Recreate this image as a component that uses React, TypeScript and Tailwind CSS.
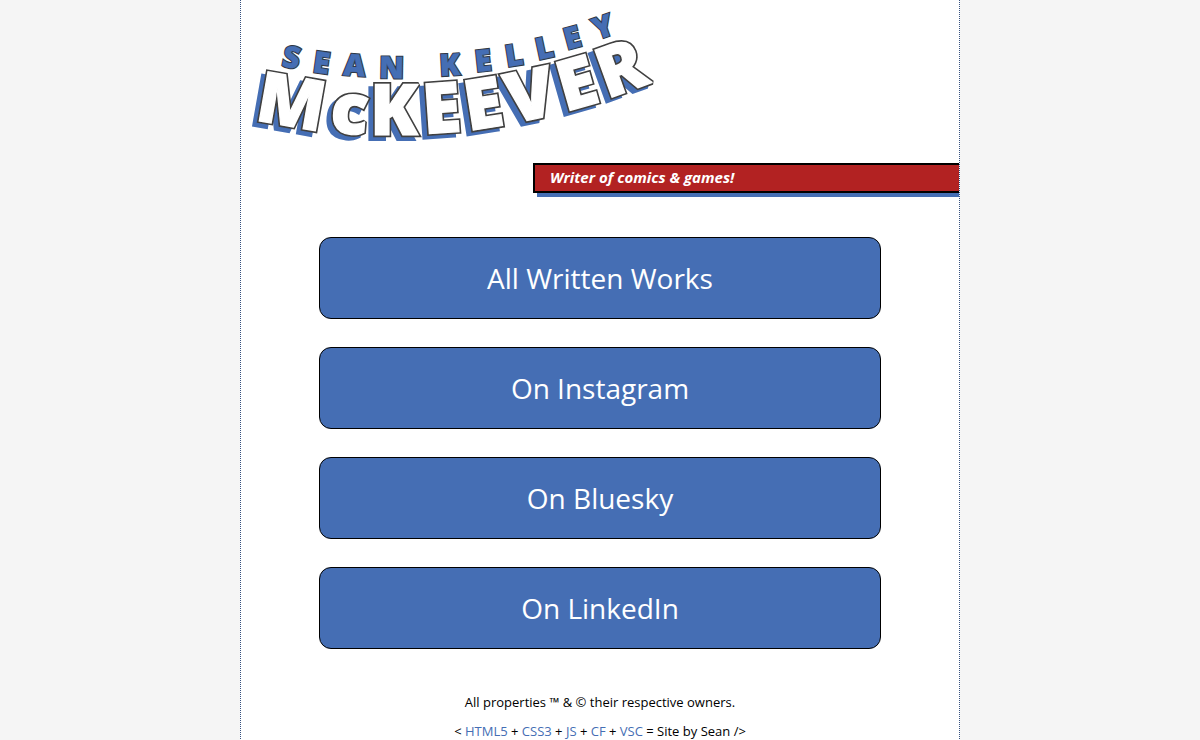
type Letter = {
  char: string;
  x: number;
  y: number;
  angle: number;
};

type NavLink = {
  label: string;
  href: string;
};

const firstNames: Letter[] = [
  { char: "S", x: 40, y: 66, angle: 11 },
  { char: "E", x: 71, y: 72, angle: 8 },
  { char: "A", x: 102, y: 75, angle: 4 },
  { char: "N", x: 138, y: 78, angle: 1 },
  { char: "K", x: 199, y: 76, angle: -3 },
  { char: "E", x: 235, y: 72, angle: -6 },
  { char: "L", x: 266, y: 67, angle: -9 },
  { char: "L", x: 297, y: 60, angle: -12 },
  { char: "E", x: 326, y: 50, angle: -15 },
  { char: "Y", x: 356, y: 40, angle: -19 },
];

const lastName: Letter[] = [
  { char: "M", x: 13, y: 120, angle: 10 },
  { char: "c", x: 88, y: 132, angle: 5 },
  { char: "K", x: 129, y: 135, angle: 0 },
  { char: "E", x: 183, y: 134, angle: -4 },
  { char: "E", x: 227, y: 131, angle: -9 },
  { char: "V", x: 270, y: 124, angle: -12 },
  { char: "E", x: 324, y: 112, angle: -16 },
  { char: "R", x: 366, y: 99, angle: -20 },
];

const links: NavLink[] = [
  { label: "All Written Works", href: "#works" },
  { label: "On Instagram", href: "#instagram" },
  { label: "On Bluesky", href: "#bluesky" },
  { label: "On LinkedIn", href: "#linkedin" },
];

const credits: NavLink[] = [
  { label: "HTML5", href: "#html5" },
  { label: "CSS3", href: "#css3" },
  { label: "JS", href: "#js" },
  { label: "CF", href: "#cf" },
  { label: "VSC", href: "#vsc" },
];

const Letters = ({ items }: { items: Letter[] }) => (
  <>
    {items.map((l, i) => (
      <text key={i} transform={`translate(${l.x} ${l.y}) rotate(${l.angle})`}>
        {l.char}
      </text>
    ))}
  </>
);

const Logo = () => (
  <svg
    viewBox="0 0 430 163"
    className="w-[430px] max-w-full overflow-visible font-extrabold"
    role="img"
    aria-label="Sean Kelley McKeever"
    strokeLinejoin="miter"
    strokeMiterlimit="2"
  >
    {/* drop shadow */}
    <g
      transform="translate(-5 4)"
      className="fill-[#456eb4] stroke-[#456eb4] text-[70px]"
      strokeWidth="4"
      aria-hidden="true"
    >
      <Letters items={lastName} />
    </g>
    {/* dark outline, then the white face on top */}
    <g className="fill-[#404040] stroke-[#404040] text-[70px]" strokeWidth="4.5">
      <Letters items={lastName} />
    </g>
    <g className="fill-white stroke-white text-[70px]" strokeWidth="1.2">
      <Letters items={lastName} />
    </g>

    <g className="fill-[#303845] stroke-[#303845] text-[30px]" strokeWidth="2.4">
      <Letters items={firstNames} />
    </g>
    <g className="fill-[#456eb4] stroke-[#456eb4] text-[30px]" strokeWidth="0.4">
      <Letters items={firstNames} />
    </g>
  </svg>
);

const App = () => {
  return (
    <div className="min-h-screen bg-[#f5f5f5] font-['Open_Sans',sans-serif] text-black">
      <div className="mx-auto flex min-h-screen w-full flex-col overflow-hidden border-x border-dotted border-[#35507f] bg-white md:w-3/5">
        <header className="flex flex-col">
          <h1>
            <Logo />
          </h1>
          <p className="w-[426px] max-w-full self-end border-2 border-r-0 border-black bg-[#b22222] px-[15px] pb-0.5 text-[15px] leading-6 font-bold text-white italic shadow-[4px_4px_0_#456eb4]">
            Writer of comics &amp; games!
          </p>
        </header>

        <nav className="mx-auto mt-11 flex w-[calc(78%+2px)] flex-col gap-7">
          {links.map((link) => (
            <a
              key={link.label}
              href={link.href}
              className="rounded-xl border border-black bg-[#456eb4] py-5 text-center text-[28px] leading-10 text-white"
            >
              {link.label}
            </a>
          ))}
        </nav>

        <footer className="mt-[43px] flex flex-col gap-[9px] text-center text-[13px] leading-5">
          <p>All properties ™ &amp; © their respective owners.</p>
          <p>
            &lt;{" "}
            {credits.map((credit, i) => (
              <span key={credit.label}>
                {i > 0 && " + "}
                <a href={credit.href} className="text-[#456eb4]">
                  {credit.label}
                </a>
              </span>
            ))}{" "}
            = Site by Sean /&gt;
          </p>
        </footer>
      </div>
    </div>
  );
};

export default App;
